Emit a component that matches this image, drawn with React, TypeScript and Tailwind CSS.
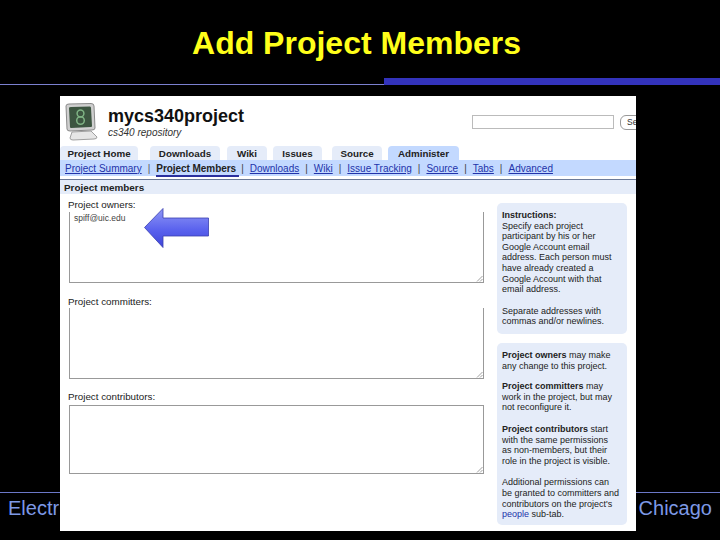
import React from 'react';

const tabs = [
  { label: 'Project Home', box: 'ml-0 w-[78px]' },
  { label: 'Downloads', box: 'ml-[12px] w-[70px]' },
  { label: 'Wiki', box: 'ml-[7px] w-[40px]' },
  { label: 'Issues', box: 'ml-[6px] w-[49px]' },
  { label: 'Source', box: 'ml-[10px] w-[50px]' },
];

const subLinks = ['Downloads', 'Wiki', 'Issue Tracking', 'Source', 'Tabs', 'Advanced'];

const MonitorLogo = () => (
  <svg width="34" height="38" viewBox="0 0 34 38" className="mt-[7px] ml-[4px] shrink-0">
    <path d="M2 3 Q2 1 5 1 L27 0.5 Q30 0.5 30 3 L31 25 Q31 27 28 27 L6 28 Q3 28 3 26 Z" fill="#cfcfcf" stroke="#8a8a8a" />
    <path d="M5 5 Q5 4 7 4 L26 3.5 Q27 3.5 27 5 L28 23 Q28 24 27 24 L7 25 Q6 25 6 24 Z" fill="#3c5540" />
    <circle cx="16.5" cy="10.5" r="3.4" fill="none" stroke="#7fb384" strokeWidth="1.5" />
    <circle cx="16.5" cy="17.5" r="3.8" fill="none" stroke="#7fb384" strokeWidth="1.5" />
    <path d="M8 29 L27 28 L33 34 Q33 36 30 36 L9 37 Q6 37 6 35 Z" fill="#e6e6e6" stroke="#a0a0a0" />
  </svg>
);

const BlueArrow = () => (
  <svg width="66" height="40" viewBox="0 0 66 40" className="absolute left-[84px] top-[112px]">
    <defs>
      <linearGradient id="arrowFill" x1="0" y1="0" x2="0" y2="1">
        <stop offset="0" stopColor="#8f97f5" />
        <stop offset="0.55" stopColor="#5a62ee" />
        <stop offset="1" stopColor="#3d44d8" />
      </linearGradient>
    </defs>
    <path d="M0.5 19.5 L19 0.5 V10 H64.5 V28 H19 V39.5 Z" fill="url(#arrowFill)" stroke="#3a40b0" strokeWidth="0.8" />
  </svg>
);

const MemberField = ({ label, value, labelClass, boxClass }: { label: string; value?: string; labelClass: string; boxClass: string }) => (
  <div className={labelClass}>
    <div className="text-[9.8px] leading-[11px] text-[#222]">{label}</div>
    <div className={`relative ml-[1px] w-[415px] border border-[#999] pl-[4px] text-[8.5px] leading-[11px] text-[#444] ${boxClass}`}>
      {value}
      <svg width="7" height="7" viewBox="0 0 7 7" className="absolute right-0 bottom-0">
        <path d="M1 6.5 L6.5 1 M4 6.5 L6.5 4" stroke="#888" strokeWidth="0.8" />
      </svg>
    </div>
  </div>
);

const ScreenShot = () => (
  <div className="absolute left-[60px] top-[96px] h-[435px] w-[576px] overflow-hidden bg-white font-['Liberation_Sans',sans-serif]">
    {/* Project header */}
    <div className="flex h-[50px]">
      <MonitorLogo />
      <div className="ml-[10px] mt-[10px] w-[364px] shrink-0">
        <div className="text-[18px] font-bold leading-[20px] text-[#111]">mycs340project</div>
        <div className="mt-[1px] text-[10px] italic leading-[11px] text-[#333]">cs340 repository</div>
      </div>
      <div className="mt-[19px] h-[14px] w-[142px] shrink-0 border border-[#bbb]" />
      <div className="mt-[19px] ml-[6px] h-[15px] w-[30px] shrink-0 rounded-l-[6px] border border-[#999] pl-[6px] text-[8.5px] leading-[13px] text-[#333]">
        Search
      </div>
    </div>

    {/* Tabs */}
    <div className="flex h-[14px] items-end">
      {tabs.map((tab) => (
        <div
          key={tab.label}
          className={`${tab.box} h-[14px] rounded-t-[4px] bg-[#e5ecf9] text-center text-[9.8px] font-bold leading-[16px] text-[#222]`}
        >
          {tab.label}
        </div>
      ))}
      <div className="ml-[6px] h-[14px] w-[71px] rounded-t-[4px] bg-[#c3d9ff] text-center text-[9.8px] font-bold leading-[16px] text-[#222]">
        Administer
      </div>
    </div>

    {/* Sub navigation */}
    <div className="flex h-[16px] items-center bg-[#c3d9ff] pl-[5px] text-[10px] text-[#2233aa]">
      <span className="underline">Project Summary</span>
      <span className="mx-[6px] text-[#555]">|</span>
      <span className="mt-[3px] border-b-2 border-[#2a2f9e] pr-[3px] font-bold leading-[12px] tracking-[-0.05px] text-[#222]">Project Members</span>
      {subLinks.map((link, i) => (
        <React.Fragment key={link}>
          <span className={`${i === 0 ? 'ml-[2px]' : 'ml-[6px]'} mr-[6px] text-[#444]`}>|</span>
          <span className="underline">{link}</span>
        </React.Fragment>
      ))}
    </div>

    <div className="mt-[3px] h-[15px] border-t border-[#6b7a99] bg-[#e5ecf9] pl-[4px] text-[9.9px] font-bold leading-[15px] text-[#222]">
      Project members
    </div>

    {/* Form and help */}
    <div className="flex">
      <div className="w-[437px] shrink-0 pl-[8px]">
        <MemberField label="Project owners:" value="spiff@uic.edu" labelClass="mt-[5px]" boxClass="h-[71px] mt-[2px] border-t-0 pt-[1px]" />
        <MemberField label="Project committers:" labelClass="mt-[13px]" boxClass="h-[71px] mt-[1px] border-t-0" />
        <MemberField label="Project contributors:" labelClass="mt-[12px]" boxClass="h-[69px] mt-[3px]" />
      </div>
      <div className="w-[130px] shrink-0 whitespace-nowrap text-[9px] leading-[10.6px] text-[#222]">
        <div className="mt-[9px] h-[131px] rounded-[5px] bg-[#e5ecf9] pl-[5px] pt-[7px]">
          <div className="font-bold">Instructions:</div>
          <div>
            Specify each project<br />
            participant by his or her<br />
            Google Account email<br />
            address. Each person must<br />
            have already created a<br />
            Google Account with that<br />
            email address.
          </div>
          <div className="mt-[11px]">
            Separate addresses with<br />
            commas and/or newlines.
          </div>
        </div>
        <div className="mt-[9px] h-[182px] rounded-[5px] bg-[#e5ecf9] pl-[5px] pt-[7px]">
          <div>
            <b>Project owners</b> may make<br />
            any change to this project.
          </div>
          <div className="mt-[10px]">
            <b>Project committers</b> may<br />
            work in the project, but may<br />
            not reconfigure it.
          </div>
          <div className="mt-[11px]">
            <b>Project contributors</b> start<br />
            with the same permissions<br />
            as non-members, but their<br />
            role in the project is visible.
          </div>
          <div className="mt-[11px]">
            Additional permissions can<br />
            be granted to committers and<br />
            contributors on the project's<br />
            <span className="text-[#2233aa]">people</span> sub-tab.
          </div>
        </div>
      </div>
    </div>

    <BlueArrow />
  </div>
);

export default function App() {
  return (
    <div className="relative flex h-[540px] w-[720px] flex-col overflow-hidden bg-black font-['Liberation_Sans',sans-serif]">
      <h1 className="h-[78px] pr-[7px] pt-[25px] text-center text-[32px] font-bold leading-[36px] text-[#ffff1a]">
        Add Project Members
      </h1>
      <div className="flex h-[7px] items-end">
        <div className="h-[1px] w-[384px] bg-[#7b80d0]" />
        <div className="h-[7px] w-[336px] bg-[#3333bb]" />
      </div>
      <div className="mt-[407px] flex justify-between border-t border-[#6c78c8] px-[8px] pt-[3px] text-[20px] leading-[24px] text-[#7d99e6]">
        <span>Electr</span>
        <span>Chicago</span>
      </div>
      <ScreenShot />
    </div>
  );
}
